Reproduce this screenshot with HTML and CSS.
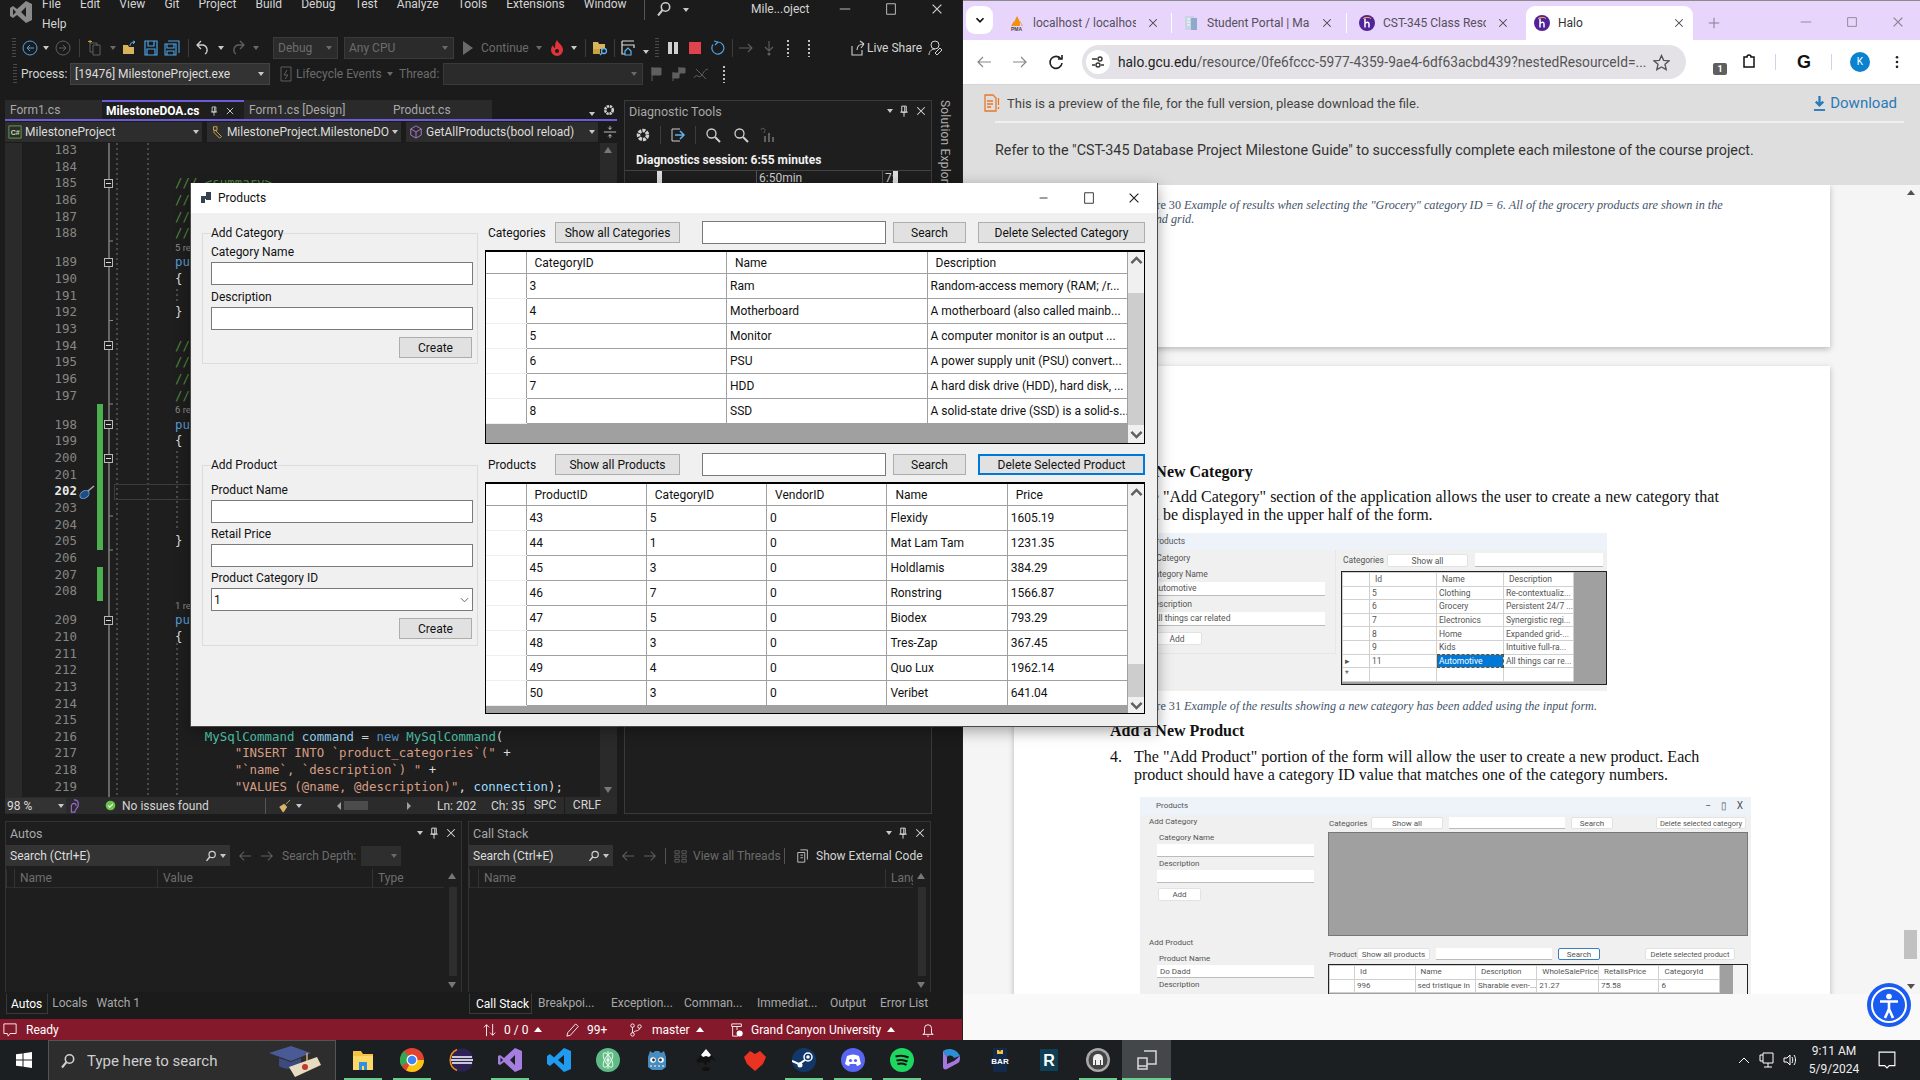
FILE: index.html
```html
<!DOCTYPE html>
<html lang="en">
<head>
    <meta charset="UTF-8">
    <title>Products</title>
    <link rel="stylesheet" href="styles.css">
</head>
<body>
<svg class="sprite">
    <symbol id="i-search" viewBox="0 0 16 16"><circle cx="9.5" cy="6" r="4.2" fill="none" stroke="currentColor" stroke-width="1.6"/><path d="M6.5 9 2 14.5" stroke="currentColor" stroke-width="2"/></symbol>
    <symbol id="i-left" viewBox="0 0 16 16"><path d="M15 8H2M7 3 2 8l5 5" fill="none" stroke="currentColor" stroke-width="1.2"/></symbol>
    <symbol id="i-right" viewBox="0 0 16 16"><path d="M1 8h13M9 3l5 5-5 5" fill="none" stroke="currentColor" stroke-width="1.2"/></symbol>
    <symbol id="i-pin" viewBox="0 0 16 16"><path d="M5 1.5h6v8H5zM3 9.5h10M8 9.5v6M9 2v7" fill="none" stroke="currentColor" stroke-width="1.3"/></symbol>
    <symbol id="i-close" viewBox="0 0 16 16"><path d="m3 3 10 10M13 3 3 13" stroke="currentColor" stroke-width="1.4"/></symbol>
    <symbol id="i-halo" viewBox="0 0 16 16"><circle cx="8" cy="8" r="8" fill="#522398"/><path d="M6 3.5v9M6 8.5c2-2 4-1.500 4 .5v3.500" fill="none" stroke="#fff" stroke-width="1.500"/><path d="M4 3.500c2-1.500 6-1.500 8 0" fill="none" stroke="#f2b632" stroke-width="1"/></symbol>
    <symbol id="i-zoom" viewBox="0 0 16 16"><circle cx="6.500" cy="6.500" r="4.500" fill="none" stroke="currentColor" stroke-width="1.300"/><path d="m10 10 5 5" stroke="currentColor" stroke-width="2"/></symbol>
    <symbol id="i-up" viewBox="0 0 10 10"><path d="m2 6.500 3-3 3 3" fill="none" stroke="#606060" stroke-width="1.500"/></symbol>
    <symbol id="i-down" viewBox="0 0 10 10"><path d="m2 3.500 3 3 3-3" fill="none" stroke="#606060" stroke-width="1.500"/></symbol>
</svg>

<div class="desktop">
    <div class="workspace">
        <section class="vs">
            <header class="vs-title">
                <svg class="vs-logo" viewBox="0 0 24 24"><path d="M17 1 23 4v16l-6 3-9-8-4 3-3-2V8l3-2 4 3zM17 7l-5 5 5 5zM4 9v6l3-3z" fill="#8a8a8a" fill-rule="evenodd"/></svg>
                <nav class="menu">
                    <span>File</span><span>Edit</span><span>View</span><span>Git</span><span>Project</span><span>Build</span><span>Debug</span><span>Test</span><span>Analyze</span><span>Tools</span><span>Extensions</span><span>Window</span><span>Help</span>
                </nav>
                <span class="vline"></span>
                <svg class="ic16 title-search"><use href="#i-search"/></svg>
                <span class="caret"></span>
                <span class="solution-name">Mile...oject</span>
                <div class="win-btns">
                    <svg viewBox="0 0 16 16"><path d="M2 8h12" stroke="currentColor" stroke-width="1"/></svg>
                    <svg viewBox="0 0 16 16"><path d="M3 2h10v12H3z" fill="none" stroke="currentColor" stroke-width="1"/></svg>
                    <svg viewBox="0 0 16 16"><use href="#i-close"/></svg>
                </div>
            </header>

            <div class="toolbar toolbar-main">
                <span class="grip"></span>
                <svg class="ic16 blue" viewBox="0 0 16 16"><circle cx="8" cy="8" r="7" fill="none" stroke="currentColor"/><path d="M12 8H5M8 5 5 8l3 3" fill="none" stroke="currentColor"/></svg>
                <span class="caret"></span>
                <svg class="ic16 dim" viewBox="0 0 16 16"><circle cx="8" cy="8" r="7" fill="none" stroke="currentColor"/><path d="M4 8h7M8 5l3 3-3 3" fill="none" stroke="currentColor"/></svg>
                <span class="tsep"></span>
                <svg class="ic16 dim" viewBox="0 0 16 16"><path d="M6 5h7v10H6zM3 3h7v3M3 3v9h3" fill="none" stroke="currentColor"/><path d="M3 0v3M1 1.500h4" stroke="#c9a23c"/></svg>
                <span class="caret dimc"></span>
                <svg class="ic16" viewBox="0 0 16 16"><path d="M1 14V5h5l1 2h5v7z" fill="#d9b25c"/><path d="M8 6c0-3 2-4 5-4M13 2l-2-1M13 2l-2 2" fill="none" stroke="#5fb3f0"/></svg>
                <svg class="ic16 blue" viewBox="0 0 16 16"><path d="M2 1h12v14H2zM5 1v5h6V1M4 15V9h8v6" fill="none" stroke="currentColor" stroke-width="1.200"/></svg>
                <svg class="ic16 blue" viewBox="0 0 16 16"><path d="M4 1h11v12M1 4h11v11H1zM3 4v4h7V4M3 15v-4h7v4" fill="none" stroke="currentColor" stroke-width="1.100"/></svg>
                <span class="tsep"></span>
                <svg class="ic16 light" viewBox="0 0 16 16"><path d="M6 1 2 5l4 4M2 5h6a5 5 0 0 1 2 9" fill="none" stroke="currentColor" stroke-width="1.300"/></svg>
                <span class="caret"></span>
                <svg class="ic16 dim" viewBox="0 0 16 16"><path d="m10 1 4 4-4 4M14 5H8a5 5 0 0 0-2 9" fill="none" stroke="currentColor" stroke-width="1.300"/></svg>
                <span class="caret dimc"></span>
                <i></i>
                <span class="combo disabled">Debug<span class="caret dimc"></span></span>
                <i></i>
                <span class="combo disabled">Any CPU<span class="caret dimc"></span></span>
                <span class="tri"></span>
                <span class="off">Continue</span>
                <span class="caret dimc"></span>
                <svg class="ic16" viewBox="0 0 16 16"><path d="M8 0c1 3 6 5 6 10a6 6 0 0 1-12 0c0-2 1-4 2-5 0 2 1 2 2 3 0-3 0-5 2-8z" fill="#e0343a"/><circle cx="8" cy="11" r="2" fill="#1e1e1e"/></svg>
                <span class="caret"></span>
                <span class="tsep"></span>
                <svg class="ic16" viewBox="0 0 16 16"><path d="M1 2h5l1 2h6v5H1z" fill="#d9b25c"/><path d="M1 9h7v5H1z" fill="#c9a23c"/><circle cx="12" cy="11" r="2.500" fill="none" stroke="#5fb3f0" stroke-width="1.300"/><path d="m10 13-2 2" stroke="#5fb3f0" stroke-width="1.300"/></svg>
                <span class="tsep"></span>
                <svg class="ic16" viewBox="0 0 16 16"><path d="M2 1h12M2 5h12v3M2 1v13h3" fill="none" stroke="#ddd" stroke-width="1.200"/><path d="M5 11l3-3 3 3v4H5z" fill="none" stroke="#5fb3f0" stroke-width="1.200"/></svg>
                <span class="caret under"></span>
                <span class="grip"></span>
                <svg class="ic16 light" viewBox="0 0 16 16"><rect x="3" y="2" width="4" height="12" fill="currentColor"/><rect x="9" y="2" width="4" height="12" fill="currentColor"/></svg>
                <svg class="ic16" viewBox="0 0 16 16"><rect x="2" y="2" width="12" height="12" fill="#e0434b"/></svg>
                <svg class="ic16 blue" viewBox="0 0 16 16"><path d="M9 2a6 6 0 1 1-5 2.500M9 2 5 1M9 2 6 5" fill="none" stroke="currentColor" stroke-width="1.200"/></svg>
                <span class="tsep"></span>
                <svg class="ic16 dim" viewBox="0 0 16 16"><path d="M1 8h13M10 4l4 4-4 4" fill="none" stroke="currentColor" stroke-width="1.100"/></svg>
                <svg class="ic16 dim" viewBox="0 0 16 16"><path d="M8 1v10M4 7l4 4 4-4" fill="none" stroke="currentColor" stroke-width="1.100"/><circle cx="8" cy="14" r="1.500" fill="currentColor"/></svg>
                <span class="dots"></span>
                <span class="dots"></span>
                <i></i>
                <svg class="ic16 light" viewBox="0 0 16 16"><path d="M3 6v9h10v-5M8 10c0-4 3-6 7-6M15 4l-4-3M15 4l-3 4" fill="none" stroke="currentColor" stroke-width="1.100"/></svg>
                <span class="on">Live Share</span>
                <svg class="ic16 light" viewBox="0 0 16 16"><circle cx="8" cy="5" r="4" fill="none" stroke="currentColor"/><path d="M2 15c0-4 3-6 6-6M10 15l5-5-2-2-5 5z" fill="none" stroke="currentColor"/></svg>
            </div>

            <div class="toolbar toolbar-debug">
                <span class="grip"></span>
                <span class="on">Process:</span>
                <span class="combo">[19476] MilestoneProject.exe<span class="caret"></span></span>
                <i></i>
                <svg class="ic16 dim" viewBox="0 0 16 16"><path d="M3 1h10v14H3z" fill="none" stroke="currentColor"/><path d="M9 4 6 9h4l-3 4" fill="none" stroke="currentColor"/></svg>
                <span class="off">Lifecycle Events</span>
                <span class="caret dimc"></span>
                <span class="off">Thread:</span>
                <span class="combo disabled"><b></b><span class="caret dimc"></span></span>
                <svg class="ic16 dim" viewBox="0 0 16 16"><path d="M3 1v14M3 2h9v7H3z" fill="currentColor" stroke="currentColor"/></svg>
                <svg class="ic16 dim" viewBox="0 0 16 16"><path d="M3 6v9M3 7h6v5H3zM9 1v8M9 2h6v5H9z" fill="currentColor" stroke="currentColor"/></svg>
                <svg class="ic16 dim" viewBox="0 0 16 16"><path d="M1 12c3-6 5 2 8-3s3-5 6-6M3 3l10 10" fill="none" stroke="currentColor"/></svg>
                <span class="dots"></span>
            </div>

            <div class="vs-main">
                <div class="editor">
                    <div class="doc-tabs">
                        <span class="doc-tab w-form">Form1.cs</span>
                        <span class="doc-tab active w-doa">MilestoneDOA.cs<svg class="ic10"><use href="#i-pin"/></svg><svg class="ic10"><use href="#i-close"/></svg></span>
                        <span class="doc-tab w-design">Form1.cs [Design]</span>
                        <span class="doc-tab w-product">Product.cs</span>
                        <span class="doc-tab-tools"><span class="caret under"></span><svg class="ic12 light" viewBox="0 0 16 16"><circle cx="8" cy="8" r="5" fill="none" stroke="currentColor" stroke-width="3.500" stroke-dasharray="3 1"/></svg></span>
                    </div>
                    <div class="nav-bar">
                        <span class="nav-combo w-nav1"><svg class="ic14" viewBox="0 0 16 16"><path d="M1 1h14v14H1z" fill="none" stroke="#6aa84f"/><text x="3" y="11" class="csharp">C#</text></svg>MilestoneProject<span class="caret"></span></span>
                        <span class="nav-combo w-nav2"><svg class="ic14" viewBox="0 0 16 16"><path d="M4 2h4v4H4zM6 6l7 7-2 2-7-7z" fill="none" stroke="#d9b25c"/></svg>MilestoneProject.MilestoneDO<span class="caret"></span></span>
                        <span class="nav-combo w-nav3"><svg class="ic14" viewBox="0 0 16 16"><path d="M8 1l6 3.500v7L8 15l-6-3.500v-7zM2 4.500 8 8l6-3.500M8 8v7" fill="none" stroke="#b180d7"/></svg>GetAllProducts(bool reload)<span class="caret"></span></span>
                        <svg class="ic14 light" viewBox="0 0 16 16"><path d="M1 8h14M8 1v4M8 11v4M6 3l2 2 2-2M6 13l2-2 2 2" fill="none" stroke="currentColor"/></svg>
                    </div>
                    <div class="code">
                        <div class="code-lines">
                            <div class="ln"><b>183</b></div>
                            <div class="ln"><b>184</b></div>
                            <div class="ln"><b>185</b><span class="cm">/// &lt;summary&gt;</span></div>
                            <div class="ln"><b>186</b><span class="cm">///</span></div>
                            <div class="ln"><b>187</b><span class="cm">///</span></div>
                            <div class="ln"><b>188</b><span class="cm">///</span></div>
                            <div class="lens">5 references</div>
                            <div class="ln"><b>189</b><span class="kw">public</span></div>
                            <div class="ln"><b>190</b><span class="pn">{</span></div>
                            <div class="ln"><b>191</b></div>
                            <div class="ln"><b>192</b><span class="pn">}</span></div>
                            <div class="ln"><b>193</b></div>
                            <div class="ln"><b>194</b><span class="cm">///</span></div>
                            <div class="ln"><b>195</b><span class="cm">///</span></div>
                            <div class="ln"><b>196</b><span class="cm">///</span></div>
                            <div class="ln"><b>197</b><span class="cm">///</span></div>
                            <div class="lens">6 references</div>
                            <div class="ln"><b>198</b><span class="kw">public</span></div>
                            <div class="ln"><b>199</b><span class="pn">{</span></div>
                            <div class="ln"><b>200</b></div>
                            <div class="ln"><b>201</b></div>
                            <div class="ln current"><b>202</b></div>
                            <div class="ln"><b>203</b></div>
                            <div class="ln"><b>204</b></div>
                            <div class="ln"><b>205</b><span class="pn">}</span></div>
                            <div class="ln"><b>206</b></div>
                            <div class="ln"><b>207</b></div>
                            <div class="ln"><b>208</b></div>
                            <div class="lens">1 reference</div>
                            <div class="ln"><b>209</b><span class="kw">public</span></div>
                            <div class="ln"><b>210</b><span class="pn">{</span></div>
                            <div class="ln"><b>211</b></div>
                            <div class="ln"><b>212</b></div>
                            <div class="ln"><b>213</b></div>
                            <div class="ln"><b>214</b></div>
                            <div class="ln"><b>215</b></div>
                            <div class="ln"><b>216</b><span>    <span class="ty">MySqlCommand</span> <span class="id">command</span> <span class="pn">=</span> <span class="kw">new</span> <span class="ty">MySqlCommand</span><span class="pn">(</span></span></div>
                            <div class="ln"><b>217</b><span>        <span class="st">"INSERT INTO `product_categories`("</span> <span class="pn">+</span></span></div>
                            <div class="ln"><b>218</b><span>        <span class="st">"`name`, `description`) "</span> <span class="pn">+</span></span></div>
                            <div class="ln"><b>219</b><span>        <span class="st">"VALUES (@name, @description)"</span><span class="pn">,</span> <span class="id">connection</span><span class="pn">);</span></span></div>
                        </div>
                        <!-- overlays on the editor margin -->
                        <span class="gutter"></span>
                        <span class="chg chg-a"></span>
                        <span class="chg chg-b"></span>
                        <svg class="margin-art" viewBox="0 0 40 654" width="40" height="654">
                            <path d="M10 0v654" stroke="#b0b0b0"/>
                            <path d="M10 98h4M10 177.500h4M10 261h4M10 373h4M10 407h4" stroke="#8a8a8a"/>
                            <path d="M18 0v654M49 0v654M78 146v14M78 308v80M78 500v154" stroke="#777" stroke-dasharray="2 3"/>
                            <g fill="#1e1e1e" stroke="#b8b8b8">
                                <rect x="5.500" y="36.500" width="8" height="8"/><rect x="5.500" y="115.500" width="8" height="8"/><rect x="5.500" y="198.500" width="8" height="8"/><rect x="5.500" y="277.500" width="8" height="8"/><rect x="5.500" y="311.500" width="8" height="8"/><rect x="5.500" y="473.500" width="8" height="8"/>
                            </g>
                            <path d="M7 40.500h5M7 119.500h5M7 202.500h5M7 281.500h5M7 315.500h5M7 477.500h5" stroke="#ddd"/>
                        </svg>
                        <svg class="screwdriver" viewBox="0 0 16 16"><path d="m9 7 6-5" stroke="#aaa" stroke-width="1.500"/><ellipse cx="5.500" cy="10.500" rx="5" ry="3.500" transform="rotate(-35 5.500 10.500)" fill="#1f4d80" stroke="#5c9ce0"/></svg>
                        <span class="cur-box"></span>
                        <span class="code-scroll"><span class="sb-up"></span><span class="sb-down"></span></span>
                    </div>
                    <div class="ed-status">
                        <span class="st-zoom">98 %<span class="caret"></span></span>
                        <svg class="ic14" viewBox="0 0 16 16"><path d="M8 1c3 0 5 2 5 5 0 5-4 5-4 9H5V8c0-1 1-3 3-3s3 2 2 3" fill="none" stroke="#9a6ad0" stroke-width="1.300"/></svg>
                        <svg class="st-ok" viewBox="0 0 16 16"><circle cx="8" cy="8" r="7" fill="#6cc24a"/><path d="m4.500 8 2.500 2.500 4.500-5" fill="none" stroke="#fff" stroke-width="1.500"/></svg>
                        <span class="on st-issues">No issues found</span>
                        <span class="vline"></span>
                        <svg class="ic14" viewBox="0 0 16 16"><path d="m9 6 5-5M2 9l5-3 3 3-4 6z" fill="#d8b56a" stroke="#d8b56a"/></svg>
                        <span class="caret"></span>
                        <span class="st-hscroll"><span class="tri-l"></span><em></em><span class="tri-r"></span></span>
                        <span class="on st-ln">Ln: 202</span>
                        <span class="on st-ch">Ch: 35</span>
                        <span class="on st-box st-spc">SPC</span>
                        <span class="on st-box st-crlf">CRLF</span>
                    </div>
                </div>

                <aside class="diag">
                    <div class="pane-title diag-title">Diagnostic Tools<span class="pane-btns"><span class="caret"></span><svg class="ic12"><use href="#i-pin"/></svg><svg class="ic12"><use href="#i-close"/></svg></span></div>
                    <div class="diag-tools">
                        <svg class="ic16 light" viewBox="0 0 16 16"><circle cx="8" cy="8" r="4.500" fill="none" stroke="currentColor" stroke-width="3.500" stroke-dasharray="3 1"/></svg>
                        <span class="tsep"></span>
                        <svg class="ic16" viewBox="0 0 16 16"><path d="M10 2H2v12h8" fill="none" stroke="#ccc"/><path d="M5 8h9M10 4l4 4-4 4" fill="none" stroke="#5fb3f0" stroke-width="1.500"/></svg>
                        <span class="tsep"></span>
                        <svg class="ic16 light"><use href="#i-zoom"/></svg>
                        <svg class="ic16 light zoom-out"><use href="#i-zoom"/></svg>
                        <svg class="ic16 dim chart" viewBox="0 0 16 16"><path d="M5 15V9M9 15V6M13 15v-5" stroke="currentColor" stroke-width="2"/><path d="M1 3a2 2 0 1 1 3 2v1" fill="none" stroke="currentColor"/></svg>
                    </div>
                    <div class="diag-session">Diagnostics session: 6:55 minutes</div>
                    <div class="diag-ruler">
                        <span class="handle h1"></span>
                        <span class="tick t1">6:50min</span>
                        <span class="tick t2">7:</span>
                        <span class="handle h2"></span>
                    </div>
                </aside>

                <div class="side-tab">Solution Explorer</div>
            </div>

            <div class="panels">
                <div class="pane pane-autos">
                    <div class="pane-title">Autos<span class="pane-btns"><span class="caret"></span><svg class="ic12"><use href="#i-pin"/></svg><svg class="ic12"><use href="#i-close"/></svg></span></div>
                    <div class="pane-search">
                        <span class="searchbox">Search (Ctrl+E)<svg class="ic12 light"><use href="#i-search"/></svg><span class="caret"></span></span>
                        <svg class="ic14 dim"><use href="#i-left"/></svg>
                        <svg class="ic14 dim"><use href="#i-right"/></svg>
                        <span class="off">Search Depth:</span>
                        <span class="depth"><span class="caret dimc"></span></span>
                    </div>
                    <div class="pane-body">
                        <div class="pane-head autos-head"><span></span><span>Name</span><span>Value</span><span>Type</span></div>
                        <span class="v-scroll"><span class="sb-up"></span><span class="sb-down"></span></span>
                    </div>
                    <div class="pane-tabs"><span class="active">Autos</span><span>Locals</span><span>Watch 1</span></div>
                </div>
                <div class="pane pane-stack">
                    <div class="pane-title">Call Stack<span class="pane-btns"><span class="caret"></span><svg class="ic12"><use href="#i-pin"/></svg><svg class="ic12"><use href="#i-close"/></svg></span></div>
                    <div class="pane-search">
                        <span class="searchbox short">Search (Ctrl+E)<svg class="ic12 light"><use href="#i-search"/></svg><span class="caret"></span></span>
                        <svg class="ic14 dim"><use href="#i-left"/></svg>
                        <svg class="ic14 dim"><use href="#i-right"/></svg>
                        <span class="vline"></span>
                        <svg class="ic14 dim" viewBox="0 0 16 16"><path d="M1 2h5v3H1zM9 2h5v3H9zM1 7h5v3H1zM9 7h5v3H9zM1 12h5v3H1zM9 12h5v3H9z" fill="none" stroke="currentColor"/></svg>
                        <span class="off threads">View all Threads</span>
                        <span class="vline"></span>
                        <svg class="ic14 light ext-ic" viewBox="0 0 16 16"><path d="M5 1h8v11M2 4h8v11H2zM5 7h3M5 10h3" fill="none" stroke="currentColor"/></svg>
                        <span class="on">Show External Code</span>
                    </div>
                    <div class="pane-body">
                        <div class="pane-head stack-head"><span></span><span>Name</span><span>Lang</span></div>
                        <span class="v-scroll"><span class="sb-up"></span><span class="sb-down"></span></span>
                    </div>
                    <div class="pane-tabs stack-tabs"><span class="active">Call Stack</span><span>Breakpoi...</span><span>Exception...</span><span>Comman...</span><span>Immediat...</span><span class="t-out">Output</span><span>Error List</span></div>
                </div>
            </div>

            <footer class="vs-status">
                <svg class="ic14 bub" viewBox="0 0 16 16"><path d="M1 1h14v11H8l-2 3-1-3H1z" fill="none" stroke="#fff"/></svg>
                <span class="s-ready">Ready</span>
                <svg class="ic14" viewBox="0 0 16 16"><path d="M4 15V2M1 5l3-3 3 3M11 1v13M8 11l3 3 3-3" fill="none" stroke="#fff"/></svg>
                <span class="s-zero">0 / 0<span class="caret-up"></span></span>
                <svg class="ic14 s-pen" viewBox="0 0 16 16"><path d="M11 1l3 3-9 10-4 1 1-4z" fill="none" stroke="#fff"/></svg>
                <span class="s-99">99+</span>
                <svg class="ic14 s-branch" viewBox="0 0 16 16"><circle cx="4" cy="3" r="2" fill="none" stroke="#fff"/><circle cx="4" cy="13" r="2" fill="none" stroke="#fff"/><circle cx="12" cy="4" r="2" fill="none" stroke="#fff"/><path d="M4 5v6M12 6c0 4-6 2-7 5" fill="none" stroke="#fff"/></svg>
                <span class="s-master">master<span class="caret-up"></span></span>
                <svg class="ic14 s-org" viewBox="0 0 16 16"><path d="M2 1h11v3H2zM3 4v11h6M8 4v4" fill="none" stroke="#fff"/><circle cx="11" cy="12" r="3.500" fill="#fff"/></svg>
                <span class="s-gcu">Grand Canyon University<span class="caret-up"></span></span>
                <svg class="ic14 s-bell" viewBox="0 0 16 16"><path d="M4 12V6a4 4 0 0 1 8 0v6l2 1H2zM7 15h2" fill="none" stroke="#fff"/></svg>
            </footer>
        </section>

        <section class="chrome">
            <div class="tabstrip">
                <span class="tab-search"><svg viewBox="0 0 12 12"><path d="m3 4.500 3 3 3-3" fill="none" stroke="#111" stroke-width="1.500"/></svg></span>
                <div class="ctab t-a">
                    <svg class="fav" viewBox="0 0 16 16"><path d="M8 1 3 11h10zM5 6 2 11h3zM11 6l3 5h-3z" fill="#f29111"/><text x="2" y="15.500" class="pma">PMA</text></svg>
                    <span class="ctab-name">localhost / localhost / gcu</span><svg class="ctab-x"><use href="#i-close"/></svg>
                </div>
                <span class="tab-sep"></span>
                <div class="ctab t-b">
                    <svg class="fav" viewBox="0 0 16 16"><path d="M2 1h9v14H2z" fill="#c8d4e4"/><path d="M8 3h6v12H8z" fill="#8fa9cc"/><path d="M4 4h3M4 7h3M4 10h3" stroke="#fff"/></svg>
                    <span class="ctab-name">Student Portal | Main Page</span><svg class="ctab-x"><use href="#i-close"/></svg>
                </div>
                <span class="tab-sep"></span>
                <div class="ctab t-c">
                    <svg class="fav"><use href="#i-halo"/></svg>
                    <span class="ctab-name">CST-345 Class Resources</span><svg class="ctab-x"><use href="#i-close"/></svg>
                </div>
                <div class="ctab active t-d">
                    <svg class="fav"><use href="#i-halo"/></svg>
                    <span class="ctab-name">Halo</span><svg class="ctab-x"><use href="#i-close"/></svg>
                </div>
                <svg class="tab-new" viewBox="0 0 16 16"><path d="M8 2v12M2 8h12" stroke="#8a7f96" stroke-width="1.200"/></svg>
                <div class="win-btns light-win">
                    <svg viewBox="0 0 16 16"><path d="M2 8h12" stroke="currentColor"/></svg>
                    <svg viewBox="0 0 16 16"><path d="M3 3h10v10H3z" fill="none" stroke="currentColor"/></svg>
                    <svg viewBox="0 0 16 16"><use href="#i-close"/></svg>
                </div>
            </div>
            <div class="omnibar">
                <svg class="om-ic gray"><use href="#i-left"/></svg>
                <svg class="om-ic gray"><use href="#i-right"/></svg>
                <svg class="om-ic" viewBox="0 0 16 16"><path d="M13 5a6 6 0 1 0 1 4M14 1v4h-4" fill="none" stroke="#222" stroke-width="1.600"/></svg>
                <div class="pill">
                    <span class="pill-tune"><svg viewBox="0 0 16 16"><path d="M2 5h5M11 11h3M2 11h3" stroke="#333" stroke-width="1.400"/><circle cx="10" cy="5" r="2" fill="none" stroke="#333" stroke-width="1.400"/><circle cx="8" cy="11" r="2" fill="none" stroke="#333" stroke-width="1.400"/></svg></span>
                    <span class="url">halo.gcu.edu<em>/resource/0fe6fccc-5977-4359-9ae4-6df63acbd439?nestedResourceId=...</em></span>
                    <svg class="star" viewBox="0 0 16 16"><path d="m8 1.500 2 4.500 5 .500-3.700 3.200 1.100 5L8 12.200l-4.400 2.500 1.100-5L1 6.500 6 6z" fill="none" stroke="#555" stroke-width="1.300"/></svg>
                </div>
                <span class="ext-badge">1</span>
                <svg class="om-ic puzzle" viewBox="0 0 16 16"><path d="M3 3h3a2 2 0 0 1 4 0h3v10H3z" fill="none" stroke="#111" stroke-width="1.500"/></svg>
                <span class="om-sep"></span>
                <span class="om-g">G</span>
                <span class="om-sep"></span>
                <span class="avatar">K</span>
                <svg class="om-dots" viewBox="0 0 4 16"><circle cx="2" cy="2.500" r="1.500"/><circle cx="2" cy="8" r="1.500"/><circle cx="2" cy="13.500" r="1.500"/></svg>
            </div>
            <div class="infobar">
                <div class="info-top">
                    <svg class="info-ic" viewBox="0 0 16 20"><path d="M1 2h8l3 3v13H1zM3 8h6M3 11h6M3 14h4" fill="none" stroke="#e8782a" stroke-width="1.300"/><path d="M14.500 5v7M14.500 14v2" stroke="#e8782a" stroke-width="1.300"/></svg>
                    <span class="info-text">This is a preview of the file, for the full version, please download the file.</span>
                    <span class="info-dl"><svg viewBox="0 0 14 18"><path d="M7 1v9M3 7l4 4 4-4" fill="none" stroke="#2a7ab8" stroke-width="2.500"/><path d="M1 16h12" stroke="#2a7ab8" stroke-width="2"/></svg>Download</span>
                </div>
                <p class="info-note">Refer to the "CST-345 Database Project Milestone Guide" to successfully complete each milestone of the course project.</p>
            </div>
            <div class="viewer">
                <article class="paper paper-top">
                    <p class="caption">Figure 30 <i>Example of results when selecting the "Grocery" category ID = 6. All of the grocery products are shown in the second grid.</i></p>
                </article>
                <article class="paper paper-main">
                    <h3 class="doc-h">Add a New Category</h3>
                    <div class="doc-item"><span>3.</span><p>The "Add Category" section of the application allows the user to create a new category that<br>will be displayed in the upper half of the form.</p></div>

                    <div class="fig fig-one">
                        <div class="fig-bar">Products</div>
                        <div class="fig-cols">
                            <div class="fig-form">
                                <div class="fg-legend">Add Category</div>
                                <div class="fg-label">Category Name</div>
                                <div class="fg-input">Automotive</div>
                                <div class="fg-label">Description</div>
                                <div class="fg-input">All things car related</div>
                                <span class="fg-btn add-one">Add</span>
                            </div>
                            <div class="fig-data">
                                <div class="fg-row"><span class="fg-cap">Categories</span><span class="fg-btn show-one">Show all</span><span class="fg-box"></span></div>
                                <div class="fg-grid one">
                                    <table>
                                        <tr class="hd"><td></td><td>Id</td><td>Name</td><td>Description</td></tr>
                                        <tr><td></td><td>5</td><td>Clothing</td><td>Re-contextualiz...</td></tr>
                                        <tr><td></td><td>6</td><td>Grocery</td><td>Persistent 24/7 ...</td></tr>
                                        <tr><td></td><td>7</td><td>Electronics</td><td>Synergistic regi...</td></tr>
                                        <tr><td></td><td>8</td><td>Home</td><td>Expanded grid-...</td></tr>
                                        <tr><td></td><td>9</td><td>Kids</td><td>Intuitive full-ra...</td></tr>
                                        <tr><td>▸</td><td>11</td><td class="sel">Automotive</td><td>All things car re...</td></tr>
                                        <tr><td>*</td><td></td><td></td><td></td></tr>
                                    </table>
                                </div>
                            </div>
                        </div>
                    </div>
                    <p class="caption cap-31">Figure 31 <i>Example of the results showing a new category has been added using the input form.</i></p>

                    <h3 class="doc-h h-product">Add a New Product</h3>
                    <div class="doc-item"><span>4.</span><p>The "Add Product" portion of the form will allow the user to create a new product. Each<br>product should have a category ID value that matches one of the category numbers.</p></div>

                    <div class="fig fig-two">
                        <div class="fig-bar bar-two">Products<span class="fig-win">− &nbsp;&nbsp; ▯ &nbsp;&nbsp; X</span></div>
                        <div class="fig-cols">
                            <div class="fig-form form-two">
                                <div class="fg-legend">Add Category</div>
                                <div class="fg-label">Category Name</div>
                                <div class="fg-input"></div>
                                <div class="fg-label">Description</div>
                                <div class="fg-input"></div>
                                <span class="fg-btn add-two">Add</span>
                                <div class="fg-legend second">Add Product</div>
                                <div class="fg-label">Product Name</div>
                                <div class="fg-input">Do Dadd</div>
                                <div class="fg-label">Description</div>
                            </div>
                            <div class="fig-data data-two">
                                <div class="fg-row"><span class="fg-cap">Categories</span><span class="fg-btn show-two">Show all</span><span class="fg-box"></span><span class="fg-btn">Search</span><span class="fg-btn del-two">Delete selected category</span></div>
                                <div class="fg-empty"></div>
                                <div class="fg-row r-prod"><span class="fg-cap cap-prod">Products</span><span class="fg-btn show-prod">Show all products</span><span class="fg-box"></span><span class="fg-btn focus">Search</span><span class="fg-btn del-two del-prod">Delete selected product</span></div>
                                <div class="fg-grid two">
                                    <table>
                                        <tr class="hd"><td></td><td>Id</td><td>Name</td><td>Description</td><td>WholeSalePrice</td><td>RetailsPrice</td><td>CategoryId</td></tr>
                                        <tr><td></td><td>996</td><td>sed tristique in</td><td>Sharable even-...</td><td>21.27</td><td>75.58</td><td>6</td></tr>
                                    </table>
                                </div>
                            </div>
                        </div>
                    </div>
                </article>
                <div class="doc-scroll"><span class="doc-up"></span><span class="doc-thumb"></span><span class="doc-down"></span></div>
            </div>
            <div class="viewer-foot"></div>
            <span class="a11y"><svg viewBox="0 0 44 44"><circle cx="22" cy="22" r="22" fill="#1a5cf0"/><circle cx="22" cy="22" r="17" fill="none" stroke="#fff" stroke-width="2"/><circle cx="22" cy="13.500" r="2.800" fill="#fff"/><path d="M13 18.500h18M22 19v7M22 26l-4 9M22 26l4 9" fill="none" stroke="#fff" stroke-width="2.600"/></svg></span>
        </section>

        <!-- WinForms app floating over the other two windows -->
        <section class="products">
            <header class="p-title">
                <svg class="p-ic" viewBox="0 0 12 12"><path d="M6 0h5v8H6zM1 4h5v3H1zM1 7h4v4H1z" fill="#36414f"/></svg>
                <span>Products</span>
                <div class="win-btns dark-win">
                    <svg viewBox="0 0 16 16"><path d="M3 8h9" stroke="currentColor"/></svg>
                    <svg viewBox="0 0 16 16"><path d="M3 2h10v12H3z" fill="none" stroke="currentColor"/></svg>
                    <svg viewBox="0 0 16 16"><use href="#i-close"/></svg>
                </div>
            </header>
            <div class="p-body">
                <div class="p-left">
                    <fieldset class="gb gb-cat">
                        <legend>Add Category</legend>
                        <label>Category Name</label>
                        <input type="text">
                        <label>Description</label>
                        <input type="text">
                        <button class="win-btn create">Create</button>
                    </fieldset>
                    <fieldset class="gb gb-prod">
                        <legend>Add Product</legend>
                        <label>Product Name</label>
                        <input type="text">
                        <label>Retail Price</label>
                        <input type="text">
                        <label>Product Category ID</label>
                        <div class="select">1<svg viewBox="0 0 10 6"><path d="m1 1 4 4 4-4" fill="none" stroke="#555"/></svg></div>
                        <button class="win-btn create">Create</button>
                    </fieldset>
                </div>
                <div class="p-right">
                    <div class="p-row">
                        <span class="p-cap">Categories</span>
                        <button class="win-btn b-show">Show all Categories</button>
                        <input type="text" class="p-search">
                        <button class="win-btn b-search">Search</button>
                        <button class="win-btn b-del">Delete Selected Category</button>
                    </div>
                    <div class="dgv dgv-cat">
                        <table>
                            <tr class="hd"><td></td><td>CategoryID</td><td>Name</td><td>Description</td></tr>
                            <tr><td></td><td>3</td><td>Ram</td><td>Random-access memory (RAM; /r...</td></tr>
                            <tr><td></td><td>4</td><td>Motherboard</td><td>A motherboard (also called mainb...</td></tr>
                            <tr><td></td><td>5</td><td>Monitor</td><td>A computer monitor is an output ...</td></tr>
                            <tr><td></td><td>6</td><td>PSU</td><td>A power supply unit (PSU) convert...</td></tr>
                            <tr><td></td><td>7</td><td>HDD</td><td>A hard disk drive (HDD), hard disk, ...</td></tr>
                            <tr><td></td><td>8</td><td>SSD</td><td>A solid-state drive (SSD) is a solid-s...</td></tr>
                        </table>
                        <div class="dgv-scroll"><svg class="ar"><use href="#i-up"/></svg><span class="thumb thumb-cat"></span><svg class="ar down"><use href="#i-down"/></svg></div>
                    </div>
                    <div class="p-row row-prod">
                        <span class="p-cap">Products</span>
                        <button class="win-btn b-show">Show all Products</button>
                        <input type="text" class="p-search">
                        <button class="win-btn b-search">Search</button>
                        <button class="win-btn b-del focus">Delete Selected Product</button>
                    </div>
                    <div class="dgv dgv-prod">
                        <table>
                            <tr class="hd"><td></td><td>ProductID</td><td>CategoryID</td><td>VendorID</td><td>Name</td><td>Price</td></tr>
                            <tr><td></td><td>43</td><td>5</td><td>0</td><td>Flexidy</td><td>1605.19</td></tr>
                            <tr><td></td><td>44</td><td>1</td><td>0</td><td>Mat Lam Tam</td><td>1231.35</td></tr>
                            <tr><td></td><td>45</td><td>3</td><td>0</td><td>Holdlamis</td><td>384.29</td></tr>
                            <tr><td></td><td>46</td><td>7</td><td>0</td><td>Ronstring</td><td>1566.87</td></tr>
                            <tr><td></td><td>47</td><td>5</td><td>0</td><td>Biodex</td><td>793.29</td></tr>
                            <tr><td></td><td>48</td><td>3</td><td>0</td><td>Tres-Zap</td><td>367.45</td></tr>
                            <tr><td></td><td>49</td><td>4</td><td>0</td><td>Quo Lux</td><td>1962.14</td></tr>
                            <tr><td></td><td>50</td><td>3</td><td>0</td><td>Veribet</td><td>641.04</td></tr>
                        </table>
                        <div class="dgv-scroll"><svg class="ar"><use href="#i-up"/></svg><span class="thumb thumb-prod"></span><svg class="ar down"><use href="#i-down"/></svg></div>
                    </div>
                </div>
            </div>
        </section>
    </div>

    <footer class="taskbar">
        <svg class="tb-start" viewBox="0 0 16 16"><path d="M0 2.300 6.500 1.400V7.500H0zM7.500 1.200 16 0v7.500H7.500zM0 8.500h6.500v6.100L0 13.700zM7.500 8.500H16V16l-8.500-1.200z" fill="#fff"/></svg>
        <div class="tb-searchbox">
            <svg class="ic16 light"><use href="#i-search"/></svg>
            <span>Type here to search</span>
            <svg class="tb-cap" viewBox="0 0 56 36"><path d="M2 10 24 3l20 7-20 8z" fill="#4a5a96"/><path d="M12 15v8c6 4 16 4 22 0v-8l-10 4z" fill="#3c4a80"/><path d="M40 10v14" stroke="#d9b25c" stroke-width="1.500"/><path d="M22 24 50 14l4 8-26 12z" fill="#e8dcc0"/><circle cx="38" cy="24" r="3" fill="#c0392b"/></svg>
        </div>
        <div class="tb-apps">
            <span class="app run"><svg viewBox="0 0 24 24"><path d="M2 3h8l2 3h10v16H2z" fill="#f4c542"/><path d="M2 8h20v14H2z" fill="#ffd968"/><path d="M8 14h8v8H8z" fill="#2f8fe0"/><path d="M11 18h2v4h-2z" fill="#ffd968"/></svg></span>
            <span class="app run"><svg viewBox="0 0 24 24"><circle cx="12" cy="12" r="12" fill="#e0442f"/><path d="M12 12 1.500 18A12 12 0 0 1 4 3z" fill="#33a852"/><path d="M12 12h12a12 12 0 0 1-17.800 10.500z" fill="#f9c513"/><circle cx="12" cy="12" r="5.500" fill="#fff"/><circle cx="12" cy="12" r="4.300" fill="#4285f4"/></svg></span>
            <span class="app"><svg viewBox="0 0 24 24"><circle cx="13" cy="12" r="11.500" fill="#2c2255"/><path d="M8 1.500a11.500 11.500 0 0 0 0 21" fill="none" stroke="#f08c1e" stroke-width="1.500"/><path d="M3 9h20M2 12h22M3 15h20" stroke="#fff" stroke-width="1.500"/></svg></span>
            <span class="app run half"><svg viewBox="0 0 24 24"><path d="M17 0 24 3v18l-7 3L6 14l-4 3-2-1V8l2-1 4 3zM17 7l-5 5 5 5zM2.500 9.500v5L5 12z" fill="#a67ee0" fill-rule="evenodd"/></svg></span>
            <span class="app"><svg viewBox="0 0 24 24"><path d="M17 0 24 3v18l-7 3L7 14.500 3 18l-3-2V8l3-2 4 3.500zM17 7l-6 5 6 5z" fill="#1f9cf0" fill-rule="evenodd"/></svg></span>
            <span class="app"><svg viewBox="0 0 24 24"><ellipse cx="12" cy="12" rx="12" ry="12" fill="#5fbb85"/><ellipse cx="12" cy="12" rx="8" ry="3.200" fill="none" stroke="#eaf7ef" transform="rotate(60 12 12)"/><ellipse cx="12" cy="12" rx="8" ry="3.200" fill="none" stroke="#eaf7ef" transform="rotate(-60 12 12)"/><path d="M12 3v18" stroke="#eaf7ef"/><circle cx="12" cy="12" r="1.800" fill="#eaf7ef"/></svg></span>
            <span class="app"><svg viewBox="0 0 24 24"><path d="M3 9 5 3l3 2 2-2h4l2 2 3-2 2 6v10l-4 3H7l-4-3z" fill="#478cbf"/><circle cx="8" cy="12" r="2.800" fill="#fff"/><circle cx="16" cy="12" r="2.800" fill="#fff"/><circle cx="8.500" cy="12" r="1.400" fill="#333"/><circle cx="15.500" cy="12" r="1.400" fill="#333"/><path d="M5 18h14" stroke="#fff" stroke-dasharray="2 2"/></svg></span>
            <span class="app"><svg viewBox="0 0 24 24"><path d="M12 1 22 13l-5-2-2 4-2-1-1 4-3-4-4 1-3-2z" fill="#111"/><path d="M12 1 17 7l-2 2-3-1-3 1-2-2z" fill="#fff"/><ellipse cx="12" cy="21" rx="4" ry="2" fill="#111"/></svg></span>
            <span class="app"><svg viewBox="0 0 24 24"><path d="M7 3 12 6l5-3 6 6-3 7-8 7-8-7-3-7z" fill="#ea3323"/></svg></span>
            <span class="app run"><svg viewBox="0 0 24 24"><circle cx="12" cy="12" r="12" fill="#12386a"/><circle cx="16" cy="9" r="4" fill="none" stroke="#fff" stroke-width="1.500"/><circle cx="16" cy="9" r="1.800" fill="#fff"/><path d="M0 13l7 3 6-4" fill="none" stroke="#fff" stroke-width="2"/><circle cx="8" cy="17" r="2.500" fill="#fff"/></svg></span>
            <span class="app run"><svg viewBox="0 0 24 24"><circle cx="12" cy="12" r="12" fill="#5865f2"/><path d="M6 8c4-2 8-2 12 0l2 8c-2 1-3 2-4 2l-1-2H9l-1 2c-1 0-2-1-4-2z" fill="#fff"/><circle cx="9.500" cy="12.500" r="1.600" fill="#5865f2"/><circle cx="14.500" cy="12.500" r="1.600" fill="#5865f2"/></svg></span>
            <span class="app run"><svg viewBox="0 0 24 24"><circle cx="12" cy="12" r="12" fill="#1ed760"/><path d="M5.500 8.500c4-1.200 9-1 13 1M6.500 12.500c3.500-1 7.500-.7 11 1M7.500 16c3-.8 6-.5 9 .9" fill="none" stroke="#111" stroke-width="2"/></svg></span>
            <span class="app"><svg viewBox="0 0 24 24"><path d="M4 3c5-4 14-2 17 5l-6 2c-2-3-5-3-7-1z" fill="#2d8fd8"/><path d="M4 3v16c0 2 2 3 4 2l11-6c2-1 2-4 2-7l-6 5-7 3V9z" fill="#a577e0"/></svg></span>
            <span class="app"><svg viewBox="0 0 24 24"><path d="M5 0h14v24H5z" fill="#13294a"/><path d="M9 2h2l1 2 1-2h2v4H9z" fill="#f2c33c"/><text x="12" y="16" class="bar-txt">BAR</text></svg></span>
            <span class="app"><svg viewBox="0 0 24 24"><path d="M3 1h18v22H3z" fill="#0e3f55"/><text x="12" y="18" class="r-txt">R</text></svg></span>
            <span class="app run"><svg viewBox="0 0 24 24"><circle cx="12" cy="12" r="12" fill="#a8a8a8"/><circle cx="12" cy="12" r="9.500" fill="#444"/><path d="M7 11c0-4 3-5 5-5s5 1 5 5v6h-2v-5h-1v5h-4v-5H9v5H7z" fill="#eee"/></svg></span>
            <span class="app run focus"><svg viewBox="0 0 24 24"><path d="M3 10h9v11H3zM9 3h12v13h-9M3 18h9" fill="none" stroke="#d8d8d8" stroke-width="1.500"/></svg></span>
        </div>
        <div class="tray">
            <svg viewBox="0 0 16 16" class="tray-ic"><path d="m3 11 5-5 5 5" fill="none" stroke="#fff"/></svg>
            <svg viewBox="0 0 16 16" class="tray-ic"><path d="M4 1h10v10H4zM9 11v4M5 15h8M1 3h3M1 3v6h3" fill="none" stroke="#fff"/></svg>
            <svg viewBox="0 0 16 16" class="tray-ic"><path d="M2 6h3l3-3v10l-3-3H2zM10 5c1 2 1 4 0 6M12 3c2 3 2 7 0 10" fill="none" stroke="#fff"/></svg>
            <div class="clock"><span>9:11 AM</span><span>5/9/2024</span></div>
            <svg viewBox="0 0 16 16" class="tray-note"><path d="M1 1h14v12h-5l-2 2-2-2H1z" fill="none" stroke="#fff"/></svg>
        </div>
    </footer>
</div>
</body>
</html>
```
FILE: styles.css
```css
* {
    box-sizing: border-box;
}

html, body {
    margin: 0;
    padding: 0;
}

body {
    font-family: Roboto, "Noto Sans", sans-serif;
    font-size: 12px;
    color: #ccc;
    background: #111;
    overflow: hidden;
}

.sprite {
    display: none;
}

.desktop {
    width: 1920px;
    height: 1080px;
    display: flex;
    flex-direction: column;
    overflow: hidden;
}

.workspace {
    position: relative;
    height: 1040px;
    display: flex;
}

/* shared little bits */
.ic10 { width: 10px; height: 10px; color: #ddd; flex: none; }
.ic12 { width: 12px; height: 12px; color: #ddd; flex: none; }
.ic14 { width: 14px; height: 14px; flex: none; }
.ic16 { width: 16px; height: 16px; flex: none; }
.blue { color: #4da3e8; }
.dim { color: #5f5f5f; }
.light { color: #d0d0d0; }
.on { color: #d4d4d4; white-space: nowrap; }
.off { color: #6c6c6c; white-space: nowrap; }

.caret {
    width: 0;
    height: 0;
    border-left: 3px solid transparent;
    border-right: 3px solid transparent;
    border-top: 4px solid #c8c8c8;
    flex: none;
}

.caret.dimc { border-top-color: #6a6a6a; }

.caret-up {
    display: inline-block;
    width: 0;
    height: 0;
    margin-left: 6px;
    vertical-align: 2px;
    border-left: 4px solid transparent;
    border-right: 4px solid transparent;
    border-bottom: 5px solid #fff;
}

.vline {
    width: 1px;
    height: 16px;
    background: #555;
    flex: none;
}

.win-btns {
    display: flex;
    color: #d0d0d0;
}

.win-btns svg {
    width: 14px;
    height: 14px;
}

/* ---------- Visual Studio ---------- */
.vs {
    width: 962px;
    height: 1040px;
    flex: none;
    display: flex;
    flex-direction: column;
    background: #1b1b1b;
    overflow: hidden;
}

.vs-title {
    height: 36px;
    flex: none;
    display: flex;
    align-items: flex-start;
    position: relative;
}

.vs-logo {
    width: 24px;
    height: 24px;
    margin: 0 0 0 9px;
    flex: none;
}

.menu {
    width: 600px;
    margin: -6px 0 0 9px;
    display: flex;
    flex-wrap: wrap;
    column-gap: 19.1px;
    line-height: 20px;
    color: #d4d4d4;
}

.vs-title .vline {
    height: 20px;
    margin: 0 0 0 2px;
}

.title-search {
    margin: 1px 0 0 11px;
    color: #c8c8c8;
}

.vs-title .caret {
    margin: 8px 0 0 11px;
}

.solution-name {
    margin: 1px 0 0 62px;
    color: #d4d4d4;
    line-height: 16px;
}

.vs-title .win-btns {
    margin: 2px 0 0 29px;
    gap: 32px;
}

.toolbar {
    height: 24px;
    flex: none;
    display: grid;
    align-items: center;
    justify-items: center;
    padding-left: 8px;
}

.toolbar .on, .toolbar .off {
    justify-self: start;
}

.toolbar-main {
    grid-template-columns: 12px 20px 12px 22px 10px 22px 13px 21px 21px 22px 10px 20px 16px 18px 18px 8px 65px 6px 110px 27px 50px 16px 20px 14px 8px 22px 6px 22px 14px 8px 24px 20px 24px 6px 22px 24px 14px 28px 24px 20px 57px 22px;
}

.toolbar-debug {
    margin-top: 2px;
    grid-template-columns: 13px 49px 200px 6px 20px 84px 19px 44px 200px 28px 14px 32px 14px;
}

.grip {
    width: 4px;
    height: 20px;
    background-image: linear-gradient(#4a4a4a 1px, transparent 1px);
    background-size: 4px 3px;
}

.tsep {
    width: 1px;
    height: 18px;
    background: #3d3d3d;
}

.tri {
    width: 0;
    height: 0;
    border-top: 7px solid transparent;
    border-bottom: 7px solid transparent;
    border-left: 10px solid #6a6a6a;
}

.dots {
    width: 4px;
    height: 18px;
    background: radial-gradient(circle, #c0c0c0 1px, transparent 1px) 0 0 / 4px 4px;
}

.under {
    margin-top: 8px;
    box-shadow: 0 6px 0 -5px #c8c8c8;
}

.combo {
    width: 100%;
    height: 22px;
    padding: 0 5px 0 4px;
    display: flex;
    align-items: center;
    justify-content: space-between;
    background: #333;
    border: 1px solid #434343;
    color: #dcdcdc;
    white-space: nowrap;
}

.combo.disabled {
    background: #2b2b2b;
    border-color: #3a3a3a;
    color: #6c6c6c;
}

.vs-main {
    height: 714px;
    flex: none;
    margin-top: 14px;
    padding-left: 5px;
    display: flex;
}

.editor {
    width: 612px;
    flex: none;
    display: flex;
    flex-direction: column;
}

.doc-tabs {
    height: 21px;
    flex: none;
    display: flex;
    border-bottom: 2px solid #6a5cd6;
}

.doc-tab {
    height: 19px;
    display: flex;
    align-items: center;
    gap: 6px;
    padding-left: 5px;
    background: #2a2a2a;
    color: #a8a8a8;
    white-space: nowrap;
}

.doc-tab.active {
    background: #1e1e1e;
    border-top: 2px solid #6a5cd6;
    padding-left: 4px;
    color: #fff;
    font-weight: 700;
}

.doc-tab.active .ic10:first-of-type { margin-left: 4px; }

.w-form { width: 97px; }
.w-doa { width: 142px; }
.w-design { width: 144px; }
.w-product { width: 104px; }

.doc-tab-tools {
    margin-left: auto;
    display: flex;
    align-items: center;
    gap: 8px;
    padding-right: 2px;
    height: 19px;
}

.nav-bar {
    height: 21px;
    flex: none;
    display: flex;
    align-items: center;
    gap: 5px;
}

.nav-combo {
    height: 20px;
    display: flex;
    align-items: center;
    gap: 3px;
    padding: 0 3px;
    background: #2d2d2d;
    color: #dcdcdc;
    white-space: nowrap;
}

.nav-combo .caret { margin-left: auto; }

.w-nav1 { width: 200px; }
.w-nav2 { width: 195px; }
.w-nav3 { width: 195px; }

.csharp {
    font: 700 8px "Liberation Sans", sans-serif;
    fill: #c0e0b0;
}

.code {
    position: relative;
    height: 654px;
    margin-top: 1px;
    background: #1e1e1e;
    overflow: hidden;
}

.code-lines {
    margin-top: -1px;
    font-family: "DejaVu Sans Mono", monospace;
    font-size: 12.4px;
    color: #dcdcdc;
}

.ln {
    height: 16.67px;
    line-height: 16.67px;
    display: flex;
    white-space: pre;
}

.ln b {
    width: 72px;
    flex: none;
    font-weight: 400;
    text-align: right;
    color: #868686;
}

.ln span:first-of-type {
    margin-left: 98px;
}

.ln span span:first-of-type {
    margin-left: 0;
}

.ln.current b {
    color: #e8e8e8;
    font-weight: 700;
}

.lens {
    height: 12.4px;
    line-height: 12px;
    padding-left: 170px;
    font-family: Roboto, sans-serif;
    font-size: 9.5px;
    color: #8a8a8a;
}

.cm { color: #4f8a3c; }
.kw { color: #569cd6; }
.ty { color: #4ec9b0; }
.id { color: #9cdcfe; }
.st { color: #d69d85; }
.pn { color: #dcdcdc; }

.gutter {
    position: absolute;
    left: 0;
    top: 0;
    bottom: 0;
    width: 17px;
    background: #2a2a2a;
}

.chg {
    position: absolute;
    left: 92px;
    width: 6px;
    background: #4caf50;
}

.chg-a { top: 261px; height: 146px; }
.chg-b { top: 424px; height: 34px; }

.margin-art {
    position: absolute;
    left: 94px;
    top: 0;
    overflow: visible;
}

.screwdriver {
    position: absolute;
    left: 74px;
    top: 341px;
    width: 16px;
    height: 16px;
}

.cur-box {
    position: absolute;
    left: 109px;
    right: 17px;
    top: 341px;
    height: 16px;
    border: 1px solid #3c3c3c;
}

.code-scroll {
    position: absolute;
    right: 0;
    top: 0;
    bottom: 0;
    width: 17px;
    background: #2a2a2a;
}

.sb-up, .sb-down {
    position: absolute;
    left: 4px;
    border-left: 4px solid transparent;
    border-right: 4px solid transparent;
}

.sb-up { top: 4px; border-bottom: 6px solid #777; }
.sb-down { bottom: 4px; border-top: 6px solid #777; }

.ed-status {
    height: 17px;
    flex: none;
    display: flex;
    align-items: center;
    background: #2b2b2b;
}

.st-zoom {
    width: 61px;
    height: 15px;
    padding-left: 2px;
    display: flex;
    justify-content: space-between;
    align-items: center;
    padding-right: 2px;
    background: #333;
    color: #dcdcdc;
}

.ed-status .ic14:nth-child(2) { margin-left: 1px; }
.st-ok { width: 11px; height: 11px; margin-left: 24px; }
.st-issues { margin-left: 6px; width: 143px; }
.ed-status .ic14:nth-child(6) { margin: 0 4px 0 12px; }

.st-hscroll {
    width: 100px;
    margin-left: 35px;
    display: flex;
    align-items: center;
    gap: 3px;
}

.st-hscroll em {
    width: 24px;
    height: 9px;
    background: #4c4c4c;
}

.tri-l { border-top: 4px solid transparent; border-bottom: 4px solid transparent; border-right: 4px solid #a0a0a0; }
.tri-r { border-top: 4px solid transparent; border-bottom: 4px solid transparent; border-left: 4px solid #a0a0a0; margin-left: 36px; }

.st-ln { margin-left: 0; width: 54px; }
.st-ch { width: 34px; }

.st-box {
    height: 17px;
    line-height: 16px;
    text-align: center;
    border-left: 1px solid #1b1b1b;
}

.st-spc { width: 39px; }
.st-crlf { width: 45px; }

.diag {
    width: 308px;
    flex: none;
    margin-left: 7px;
    border: 1px solid #3a3a3a;
    background: #1e1e1e;
}

.pane-title {
    height: 22px;
    padding-left: 4px;
    display: flex;
    align-items: center;
    color: #a8a8a8;
    font-size: 12.5px;
}

.diag-title { height: 20px; }

.pane-btns {
    margin-left: auto;
    display: flex;
    align-items: center;
    gap: 5px;
    padding-right: 4px;
}

.diag-tools {
    height: 27px;
    display: flex;
    align-items: center;
    padding-left: 10px;
    gap: 9px;
}

.zoom-out { margin-left: 3px; }
.chart { margin-left: 2px; }

.diag-session {
    height: 22px;
    line-height: 24px;
    padding-left: 11px;
    font-weight: 700;
    color: #f0f0f0;
}

.diag-ruler {
    position: relative;
    height: 20px;
    border-top: 1px solid #444;
    color: #ccc;
}

.tick {
    position: absolute;
    top: 0;
    padding-left: 2px;
    border-left: 1px solid #555;
    line-height: 14px;
}

.t1 { left: 131px; }
.t2 { left: 257px; }

.handle {
    position: absolute;
    top: 0;
    width: 5px;
    height: 12px;
    background: #ddd;
}

.h1 { left: 32px; }
.h2 { left: 268px; }

.side-tab {
    width: 20px;
    padding: 0;
    writing-mode: vertical-rl;
    color: #b0b0b0;
    letter-spacing: .2px;
}

.panels {
    height: 191px;
    flex: none;
    margin-top: 7px;
    padding-left: 5px;
    display: flex;
    gap: 6px;
}

.pane {
    display: flex;
    flex-direction: column;
    border: 1px solid #333;
    border-bottom: none;
    background: #1e1e1e;
    height: 171px;
}

.pane-autos { width: 457px; }
.pane-stack { width: 463px; }

.pane-search {
    height: 21px;
    margin: 1px 0 0;
    display: flex;
    align-items: center;
    gap: 8px;
}

.searchbox {
    width: 224px;
    height: 21px;
    padding: 0 4px;
    display: flex;
    align-items: center;
    background: #333;
    color: #dcdcdc;
}

.searchbox .ic12 { margin-left: auto; margin-right: 3px; }
.searchbox.short { width: 144px; }

.threads { width: 83px; margin-left: -3px; }
.ext-ic { margin-left: 3px; }
.ext-ic + .on { margin-left: -2px; }

.depth {
    width: 40px;
    height: 20px;
    margin-left: -3px;
    display: flex;
    align-items: center;
    justify-content: flex-end;
    padding-right: 4px;
    background: #2e2e2e;
}

.pane-body {
    position: relative;
    flex: 1;
    margin-top: 3px;
}

.pane-head {
    height: 19px;
    display: grid;
    align-items: center;
    color: #6e6e6e;
    border-bottom: 1px solid #2e2e2e;
}

.pane-head span {
    height: 19px;
    line-height: 19px;
    padding-left: 5px;
    border-left: 1px solid #333;
}

.autos-head { grid-template-columns: 8px 143px 215px 74px; }
.stack-head { grid-template-columns: 9px 407px 40px; }

.v-scroll {
    position: absolute;
    right: 0;
    top: 0;
    bottom: 0;
    width: 17px;
    background: linear-gradient(#2e2e2e, #2e2e2e) center 18px / 8px calc(100% - 34px) no-repeat, #1e1e1e;
}

.pane-tabs {
    position: absolute;
    height: 21px;
    margin-top: 171px;
    display: flex;
    align-items: center;
    color: #a8a8a8;
}

.pane-tabs span {
    height: 21px;
    line-height: 20px;
    padding: 0 5px 0 4px;
    white-space: nowrap;
}

.pane-tabs .active {
    color: #fff;
    background: #1b1b1b;
    border: 1px solid #3a3a3a;
    border-top-color: #1b1b1b;
}

.stack-tabs span { width: 73px; padding: 0 0 0 5px; }
.stack-tabs .active { width: 63px; margin-right: 1px; padding: 0 0 0 6px; }
.stack-tabs .t-out { width: 50px; }

.vs-status {
    height: 21px;
    flex: none;
    margin-top: 7px;
    display: flex;
    align-items: center;
    background: #85192c;
    color: #fff;
}

.vs-status span { white-space: nowrap; }
.bub { margin-left: 3px; }
.s-ready { margin-left: 9px; width: 457px; }
.s-zero { margin-left: 7px; width: 62px; }
.s-99 { margin-left: 7px; width: 42px; }
.s-master { margin-left: 9px; width: 78px; }
.s-gcu { margin-left: 7px; width: 170px; }

/* ---------- Chrome ---------- */
.chrome {
    position: relative;
    width: 958px;
    height: 1040px;
    flex: none;
    display: flex;
    flex-direction: column;
    background: #fff;
    border-left: 1px solid #222;
    color: #333;
}

.tabstrip {
    height: 40px;
    flex: none;
    display: flex;
    align-items: flex-end;
    background: #e8d5fb;
    border-top: 1px solid #8b8b8b;
    padding-left: 3px;
}

.tab-search {
    width: 27px;
    height: 28px;
    margin-bottom: 6px;
    display: flex;
    align-items: center;
    justify-content: center;
    background: #fff;
    border-radius: 9px;
}

.tab-search svg { width: 14px; height: 14px; }

.ctab {
    height: 34px;
    display: flex;
    align-items: center;
    flex: none;
    color: #55505c;
}

.t-a { width: 172px; padding-left: 10px; margin-left: 6px; }
.t-b { width: 174px; padding-left: 11px; }
.t-c { width: 179px; padding-left: 12px; }
.t-d { width: 167px; padding-left: 8px; }

.ctab.active {
    background: #fff;
    color: #333;
    border-radius: 9px 9px 0 0;
}

.tab-sep {
    width: 1px;
    height: 20px;
    margin: 0 0 7px;
    background: #fff;
    flex: none;
}

.fav { width: 16px; height: 16px; flex: none; margin-right: 8px; }

.pma {
    font: 700 5px "Liberation Sans", sans-serif;
    fill: #444;
}

.ctab-name {
    width: 103px;
    overflow: hidden;
    white-space: nowrap;
    flex: none;
}

.active .ctab-name { width: 104px; }
.ctab-x { width: 12px; height: 12px; margin-left: 11px; color: #444; flex: none; }

.tab-new { width: 14px; height: 14px; margin: 0 0 10px 14px; flex: none; }

.light-win {
    margin: 0 0 11px 78px;
    gap: 32px;
    color: #8a8193;
}

.omnibar {
    height: 45px;
    flex: none;
    display: flex;
    align-items: center;
    border-bottom: 1px solid #d5d5d5;
    padding-left: 13px;
}

.om-ic {
    width: 16px;
    height: 16px;
    margin-right: 20px;
    flex: none;
}

.om-ic.gray { color: #888; }

.pill {
    width: 604px;
    height: 34px;
    margin-left: -2px;
    display: flex;
    align-items: center;
    background: #e4e2e6;
    border-radius: 17px;
    padding-left: 4px;
}

.pill-tune {
    width: 24px;
    height: 24px;
    display: flex;
    align-items: center;
    justify-content: center;
    border-radius: 12px;
    background: #fff;
}

.pill-tune svg { width: 16px; height: 16px; }

.url {
    margin-left: 8px;
    width: 537px;
    font-size: 13.75px;
    color: #1f1f1f;
    white-space: nowrap;
    overflow: hidden;
}

.url em { font-style: normal; color: #555; }

.star { width: 17px; height: 17px; margin-left: -2px; flex: none; }

.ext-badge {
    width: 14px;
    height: 12px;
    margin: 14px 0 0 27px;
    border-radius: 2px;
    background: #5f5f5f;
    color: #fff;
    font-size: 9px;
    line-height: 12px;
    text-align: center;
    font-weight: 700;
    flex: none;
}

.puzzle { margin: 0 0 0 14px; }

.om-sep {
    width: 1px;
    height: 16px;
    margin-left: 18px;
    background: #dccdea;
    flex: none;
}

.om-g {
    margin-left: 21px;
    width: 15px;
    font: 700 18px "Liberation Sans", sans-serif;
    color: #111;
}

.om-g + .om-sep { margin-left: 19px; }

.avatar {
    width: 20px;
    height: 20px;
    margin-left: 18px;
    border-radius: 50%;
    background: #0b82d0;
    color: #fff;
    font-size: 10px;
    line-height: 20px;
    text-align: center;
    flex: none;
}

.om-dots { width: 4px; height: 14px; margin-left: 25px; fill: #222; flex: none; }

.infobar {
    height: 100px;
    flex: none;
    background: #dedede;
    padding: 0 16px 0 32px;
}

.info-top {
    height: 38px;
    display: flex;
    align-items: center;
    border-bottom: 2px solid #f0f0f0;
}

.info-ic {
    width: 16px;
    height: 20px;
    margin-left: -11px;
    margin-right: 7px;
    flex: none;
}

.info-text { font-size: 13px; color: #444; }

.info-dl {
    margin-left: auto;
    margin-right: 7px;
    display: flex;
    align-items: center;
    gap: 4px;
    color: #2a7ab8;
    font-size: 15px;
}

.info-dl svg { width: 13px; height: 17px; }

.info-note {
    margin: 19px 0 0;
    font-size: 14.3px;
    color: #333;
}

.viewer {
    position: relative;
    height: 809px;
    flex: none;
    overflow: hidden;
    background: #f5f5f5;
    padding-left: 51px;
}

.paper {
    width: 816px;
    background: #fff;
    box-shadow: 0 2px 6px rgba(0, 0, 0, .25);
    font-family: "Liberation Serif", serif;
    color: #111;
}

.paper-top {
    height: 162px;
    padding: 13px 0 0 120px;
}

.paper-main {
    height: 700px;
    margin-top: 19px;
    padding: 96px 0 0 96px;
}

.caption {
    margin: 0;
    width: 606px;
    font-size: 12.2px;
    line-height: 14px;
    color: #44546a;
}

.doc-h {
    margin: 0;
    font-size: 16px;
    line-height: 20px;
}

.doc-item {
    display: flex;
    margin-top: 6px;
    font-size: 16px;
    line-height: 18px;
}

.doc-item span {
    width: 24px;
    flex: none;
}

.doc-item p {
    margin: 0;
    white-space: nowrap;
}

/* the pictures pasted in the document */
.fig {
    font-family: Roboto, sans-serif;
    font-size: 8.5px;
    color: #555;
    background: #f0f0f0;
    white-space: nowrap;
}

.fig-bar {
    height: 17px;
    line-height: 17px;
    padding-left: 56px;
    background: #eef3fa;
}

.fig-cols { display: flex; }

.fig-one {
    width: 512px;
    height: 158px;
    margin: 9px 0 0 -15px;
}

.fig-form {
    width: 241px;
    flex: none;
    padding: 2px 0 0;
}

.fig-one .fig-form {
    height: 104px;
    border-right: 1px solid #e6e6e6;
    border-bottom: 1px solid #e6e6e6;
}

.fg-legend { line-height: 12px; padding-left: 44px; }

.fg-label { margin-top: 5px; line-height: 11px; padding-left: 54px; }

.fg-input {
    width: 179px;
    height: 14px;
    margin-top: 2px;
    margin-left: 51px;
    padding-left: 7px;
    line-height: 13px;
    background: #fff;
    border-bottom: 1px solid #bbb;
}

.fig-one .fg-input + .fg-label { margin-top: 3px; }

.fg-btn {
    display: block;
    height: 13px;
    line-height: 12px;
    text-align: center;
    background: #fff;
    border: 1px solid #e2e2e2;
    border-radius: 2px;
}

.add-one { width: 50px; margin: 6px 0 0 57px; }

.fig-data { flex: 1; padding: 2px 0 0 5px; }

.fg-row {
    display: flex;
    align-items: center;
    gap: 7px;
    height: 16px;
}

.fg-cap { width: 37px; margin-left: 2px; }
.show-one { width: 81px; }

.fg-box {
    width: 128px;
    height: 14px;
    background: #fff;
    border-bottom: 1px solid #bbb;
}

.fg-grid {
    background: #a0a0a0;
    border: 1px solid #222;
    overflow: hidden;
}

.fg-grid table {
    border-collapse: collapse;
    table-layout: fixed;
    background: #fff;
}

.fg-grid td {
    height: 13.6px;
    padding: 0 0 0 2px;
    font-size: 8.5px;
    line-height: 12px;
    border: 1px solid #d0d0d0;
    overflow: hidden;
}

.fg-grid .hd td { padding-left: 5px; }

.fg-grid.one {
    width: 266px;
    height: 114px;
    margin-top: 3px;
}

.one td { width: 67px; }
.one td:first-child { width: 27px; }

.sel {
    background: #0078d7;
    color: #fff;
    outline: 1px dashed #7a4a10;
    outline-offset: -1px;
}

.cap-31 { margin-top: 8px; margin-left: 24px; width: 640px; }

.h-product { margin-top: 8px; }
.h-product + .doc-item { margin-top: 7px; }

.fig-two {
    width: 611px;
    height: 300px;
    margin: 13px 0 0 30px;
    font-size: 8px;
}

.bar-two { height: 18px; line-height: 18px; display: flex; padding-left: 16px; }

.fig-win {
    margin-left: auto;
    margin-right: 8px;
    font-size: 10px;
}

.form-two { width: 188px; padding: 1px 0 0 9px; }

.form-two .fg-legend { padding-left: 0; }
.form-two .fg-input { width: 157px; height: 13px; margin: 1px 0 0 8px; padding-left: 3px; }
.form-two .fg-label { padding-left: 10px; margin-top: 1px; }
.form-two .fg-legend + .fg-label { margin-top: 4px; }

.add-two { width: 43px; margin: 5px 0 0 9px; }

.fg-legend.second { margin-top: 36px; }

.data-two { padding: 1px 0 0; }

.data-two .fg-row { height: 14px; gap: 6px; }
.data-two .fg-btn { width: 42px; height: 12px; line-height: 11px; }
.data-two .fg-box { width: 116px; height: 12px; }
.data-two .fg-cap { width: 36px; margin-left: 1px; }
.data-two .show-two { width: 72px; }
.data-two .del-two { width: 90px; margin-left: 37px; font-size: 7.5px; }
.data-two .del-prod { margin-left: 39px; }
.data-two .cap-prod { width: 28px; }
.data-two .show-prod { width: 73px; margin-left: -6px; }
.data-two .focus { border-color: #3a7fc0; }

.fg-empty {
    width: 420px;
    height: 104px;
    margin-top: 2px;
    background: #a0a0a0;
    border: 1px solid #777;
}

.r-prod { margin-top: 11px; }

.fg-grid.two {
    width: 420px;
    height: 40px;
    margin-top: 3px;
    background: linear-gradient(90deg, #a0a0a0 404px, #f4f4f4 404px);
}

.two td { width: 60.500px; font-size: 8px; }
.two td:first-child { width: 25px; }

.doc-scroll {
    position: absolute;
    right: 3px;
    top: 0;
    bottom: 0;
    width: 13px;
    background: #f5f5f5;
}

.doc-up, .doc-down {
    position: absolute;
    left: 3px;
    border-left: 4px solid transparent;
    border-right: 4px solid transparent;
}

.doc-up { top: 5px; border-bottom: 5px solid #505050; }
.doc-down { bottom: 5px; border-top: 5px solid #505050; }

.doc-thumb {
    position: absolute;
    left: 0;
    top: 745px;
    width: 13px;
    height: 29px;
    background: #c1c1c1;
}

.viewer-foot {
    flex: 1;
    background: #f9f9f9;
}

.a11y {
    position: absolute;
    left: 904px;
    top: 983px;
    width: 44px;
    height: 44px;
}

/* ---------- Products window ---------- */
.products {
    position: absolute;
    left: 190px;
    top: 183px;
    width: 968px;
    height: 544px;
    display: flex;
    flex-direction: column;
    background: #f0f0f0;
    border: 1px solid #4a4a4a;
    border-top: none;
    box-shadow: 0 4px 14px rgba(0, 0, 0, .35);
    color: #111;
}

.p-title {
    height: 30px;
    flex: none;
    display: flex;
    align-items: center;
    background: #fff;
    font-size: 12px;
}

.p-ic {
    width: 12px;
    height: 12px;
    margin: 0 6px 0 9px;
}

.dark-win {
    margin-left: auto;
    margin-right: 16px;
    gap: 31px;
    color: #222;
}

.p-body {
    flex: 1;
    display: flex;
    padding-left: 11px;
}

.p-left {
    width: 276px;
    flex: none;
}

.gb {
    margin: 0;
    min-width: 0;
    padding: 0 4px 0 8px;
    border: 1px solid #dcdcdc;
}

.gb legend {
    margin-left: 0;
    padding: 0;
    line-height: 16px;
}

.gb-cat {
    margin-top: 12px;
    height: 139px;
}

.gb-prod {
    margin-top: 93px;
    height: 189px;
}

.gb label {
    display: block;
    line-height: 16px;
    margin-bottom: 2px;
}

.gb-cat legend + label { margin-top: 3px; }
.gb-prod legend + label { margin-top: 9px; }

.gb input {
    display: block;
    width: 262px;
    margin-bottom: 4px;
}

.gb-prod input { margin-bottom: 3px; }

input {
    height: 23px;
    padding: 0;
    background: #fff;
    border: 1px solid #7a7a7a;
    border-radius: 0;
    outline: none;
}

.select {
    width: 262px;
    height: 23px;
    padding-left: 2px;
    display: flex;
    align-items: center;
    justify-content: space-between;
    background: #fff;
    border: 1px solid #7a7a7a;
}

.select svg {
    width: 9px;
    height: 6px;
    margin-right: 3px;
}

.win-btn {
    height: 21px;
    padding: 0;
    font: inherit;
    color: #111;
    background: #e1e1e1;
    border: 1px solid #adadad;
    border-radius: 0;
    white-space: nowrap;
}

.win-btn.focus { border: 2px solid #0078d7; }

.create {
    display: block;
    width: 73px;
    margin: 7px 1px 0 auto;
}

.p-right {
    width: 660px;
    margin-left: 7px;
}

.p-row {
    height: 23px;
    margin-top: 8px;
    padding-left: 3px;
    display: flex;
    align-items: center;
}

.row-prod { margin-top: 9px; }

.p-cap { width: 67px; }
.b-show { width: 125px; }

.p-search {
    width: 184px;
    margin-left: 22px;
}

.b-search {
    width: 73px;
    margin-left: 7px;
}

.b-del {
    width: 167px;
    margin-left: 12px;
}

.dgv {
    display: flex;
    margin-top: 6px;
    background: #a0a0a0;
    border: 1px solid #000;
    border-top-width: 2px;
    overflow: hidden;
}

.dgv-cat { height: 194px; }
.dgv-prod { height: 232px; }

.dgv table {
    width: 642px;
    height: 0;
    flex: none;
    border-collapse: collapse;
    table-layout: fixed;
    background: #fff;
    margin-bottom: auto;
}

.dgv td {
    height: 25px;
    padding: 1px 0 0 3px;
    border-right: 1px solid #a0a0a0;
    border-bottom: 1px solid #a0a0a0;
    white-space: nowrap;
    overflow: hidden;
}

.dgv .hd td {
    height: 21px;
    padding-left: 8px;
}

.dgv td:first-child {
    width: 40px;
    border-bottom-color: #eee;
}

.dgv .hd td:first-child { border-bottom-color: #a0a0a0; }

.dgv-cat td:not(:first-child) { width: 200.500px; }
.dgv-prod td:not(:first-child) { width: 120.200px; }

.dgv-scroll {
    width: 17px;
    flex: none;
    display: flex;
    flex-direction: column;
    background: #f0f0f0;
}

.ar {
    width: 17px;
    height: 17px;
    flex: none;
}

.ar.down { margin-top: auto; }

.thumb {
    display: block;
    background: #cdcdcd;
    flex: none;
}

.thumb-cat { margin-top: 24px; height: 132px; }
.thumb-prod { margin-top: 163px; height: 33px; }

/* ---------- Taskbar ---------- */
.taskbar {
    height: 40px;
    flex: none;
    display: flex;
    align-items: stretch;
    background: #1c1f22;
    color: #fff;
}

.tb-start {
    width: 16px;
    height: 16px;
    margin: 12px 16px 0 16px;
    flex: none;
}

.tb-searchbox {
    width: 288px;
    display: flex;
    align-items: center;
    padding-left: 11px;
    background: #2d2d2d;
    border: 1px solid #555;
    border-bottom: none;
    font-size: 15px;
    color: #cfcfcf;
    overflow: hidden;
}

.tb-searchbox > span { margin-left: 11px; }

.tb-cap {
    width: 56px;
    height: 36px;
    margin-left: auto;
    margin-right: 12px;
    flex: none;
}

.tb-apps {
    display: flex;
    margin-left: 2px;
}

.app {
    position: relative;
    width: 49px;
    display: flex;
    align-items: center;
    justify-content: center;
}

.app svg { width: 24px; height: 24px; }

.app.run::after {
    content: "";
    position: absolute;
    left: 6px;
    right: 5px;
    bottom: 0;
    height: 2px;
    background: #6ccb8f;
}

.app.focus { background: #44474a; }
.app.focus::after { left: 0; right: 0; }

.bar-txt {
    font: 700 8px "Liberation Sans", sans-serif;
    fill: #fff;
    text-anchor: middle;
}

.r-txt {
    font: 700 16px "Liberation Sans", sans-serif;
    fill: #fff;
    text-anchor: middle;
}

.tray {
    margin-left: auto;
    display: flex;
    align-items: center;
    padding-right: 24px;
}

.tray-ic { width: 16px; height: 16px; margin-right: 7px; }

.clock {
    width: 66px;
    margin-left: -4px;
    display: flex;
    flex-direction: column;
    align-items: center;
    gap: 4px;
    line-height: 14px;
    color: #eee;
}

.tray-note { width: 18px; height: 18px; margin-left: 11px; }
```
